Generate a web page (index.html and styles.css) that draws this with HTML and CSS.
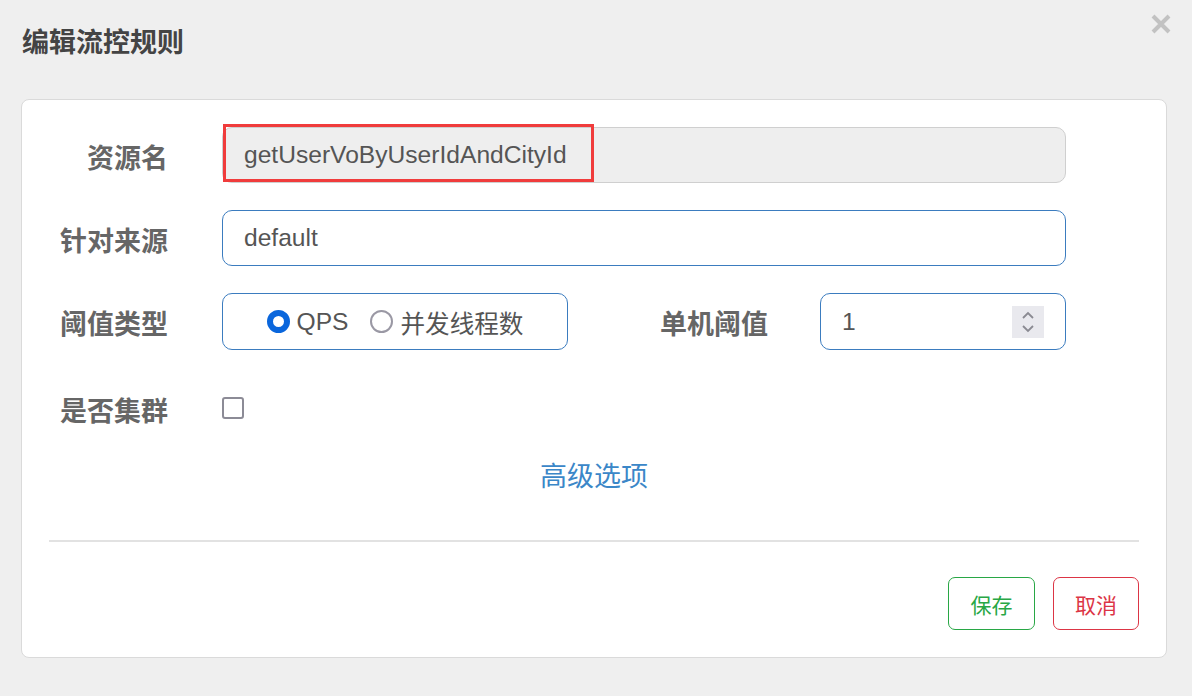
FILE: index.html
```html
<!DOCTYPE html>
<html lang="zh">
<head>
<meta charset="utf-8">
<link rel="stylesheet" href="styles.css">
</head>
<body>
<div class="modal">
  <div class="header">
    <h2 class="title">编辑流控规则</h2>
    <svg class="close" width="22" height="22" viewBox="0 0 22 22"><path d="M3 3 L19 19 M19 3 L3 19" stroke="#c2c2c2" stroke-width="4" stroke-linecap="butt"/></svg>
  </div>
  <div class="card">
    <div class="row">
      <label class="lbl">资源名</label>
      <div class="field">
        <div class="input readonly">getUserVoByUserIdAndCityId</div>
        <div class="highlight"></div>
      </div>
    </div>
    <div class="row">
      <label class="lbl">针对来源</label>
      <div class="input">default</div>
    </div>
    <div class="row row-type">
      <label class="lbl">阈值类型</label>
      <div class="inline">
        <div class="radios">
          <span class="radio on"></span><span class="rtext">QPS</span>
          <span class="radio"></span><span class="rtext">并发线程数</span>
        </div>
        <label class="lbl lbl2">单机阈值</label>
        <div class="input number">
          <span>1</span>
          <span class="spin">
            <svg width="14" height="26" viewBox="0 0 14 26"><path d="M2 9 L7 4 L12 9 M2 17 L7 22 L12 17" fill="none" stroke="#8a8a92" stroke-width="1.8"/></svg>
          </span>
        </div>
      </div>
    </div>
    <div class="row row-last">
      <label class="lbl">是否集群</label>
      <div><span class="check"></span></div>
    </div>
    <div class="adv">高级选项</div>
    <hr class="sep">
    <div class="actions">
      <button class="btn save">保存</button>
      <button class="btn cancel">取消</button>
    </div>
  </div>
</div>
</body>
</html>
```

FILE: styles.css
```css
html, body {
  margin: 0;
  padding: 0;
  background: #efefef;
  font-family: "Liberation Sans", "Noto Sans CJK SC", sans-serif;
}
.modal {
  width: 1192px;
  height: 696px;
  box-sizing: border-box;
  padding: 0 25px 0 21px;
}
.header {
  display: flex;
  justify-content: space-between;
  align-items: flex-start;
  height: 99px;
}
.title {
  margin: 27px 0 0 1px;
  font-size: 27px;
  line-height: 32px;
  font-weight: bold;
  color: #444;
}
.close {
  margin: 13px -5px 0 0;
}
.card {
  background: #fff;
  border: 1px solid #dadada;
  border-radius: 8px;
  padding: 27px 27px 27px 27px;
}
.row {
  display: grid;
  grid-template-columns: 119px 844px;
  column-gap: 54px;
  align-items: center;
  min-height: 56px;
  margin-bottom: 27px;
}
.row-type { margin-bottom: 30px; }
.row-last { margin-bottom: 21px; }
.lbl {
  text-align: right;
  font-size: 27px;
  font-weight: bold;
  color: #666;
  padding-top: 2px;
  white-space: nowrap;
}
.field { position: relative; }
.input {
  box-sizing: border-box;
  height: 56px;
  border: 1px solid #3b7cbf;
  border-radius: 10px;
  padding: 0 21px;
  display: flex;
  align-items: center;
  font-size: 24.6px;
  color: #555;
}
.input.readonly {
  background: #eee;
  border-color: #cfcfcf;
}
.highlight {
  position: absolute;
  left: 1px;
  top: -3px;
  width: 371px;
  height: 58px;
  box-sizing: border-box;
  border: 3px solid #f03c3c;
}
.inline {
  display: flex;
  align-items: center;
}
.radios {
  box-sizing: border-box;
  width: 346px;
  height: 57px;
  border: 1px solid #3b7cbf;
  border-radius: 10px;
  display: flex;
  align-items: center;
  justify-content: center;
  font-size: 24.6px;
  color: #555;
}
.radio {
  box-sizing: border-box;
  width: 23px;
  height: 23px;
  border-radius: 50%;
  border: 2px solid #9a98a4;
  margin-right: 7px;
}
.radio.on {
  border: 6px solid #0a66dc;
}
.rtext { margin-right: 22px; }
.rtext:last-child { margin-right: 0; }
.lbl2 {
  width: 200px;
  margin-right: 52px;
}
.number {
  width: 246px;
  height: 57px;
  justify-content: space-between;
  padding-right: 21px;
}
.spin {
  width: 32px;
  height: 32px;
  background: #e9e9ee;
  display: flex;
  align-items: center;
  justify-content: center;
}
.check {
  display: block;
  box-sizing: border-box;
  width: 22px;
  height: 22px;
  border: 2px solid #8c8b96;
  border-radius: 3px;
}
.adv {
  text-align: center;
  font-size: 27px;
  color: #3b87c8;
  margin-top: 0;
  line-height: 40px;
}
.sep {
  border: 0;
  border-top: 2px solid #e2e2e2;
  margin: 43px 0 35px 0;
}
.actions {
  display: flex;
  justify-content: flex-end;
  gap: 18px;
}
.btn {
  font-family: "Liberation Sans", "Noto Sans CJK SC", sans-serif;
  background: #fff;
  height: 53px;
  border-radius: 7px;
  font-size: 21px;
  padding: 0;
  cursor: pointer;
}
.save {
  width: 87px;
  color: #28a745;
  border: 1px solid #28a745;
}
.cancel {
  width: 86px;
  color: #dc3545;
  border: 1px solid #dc3545;
}
```
